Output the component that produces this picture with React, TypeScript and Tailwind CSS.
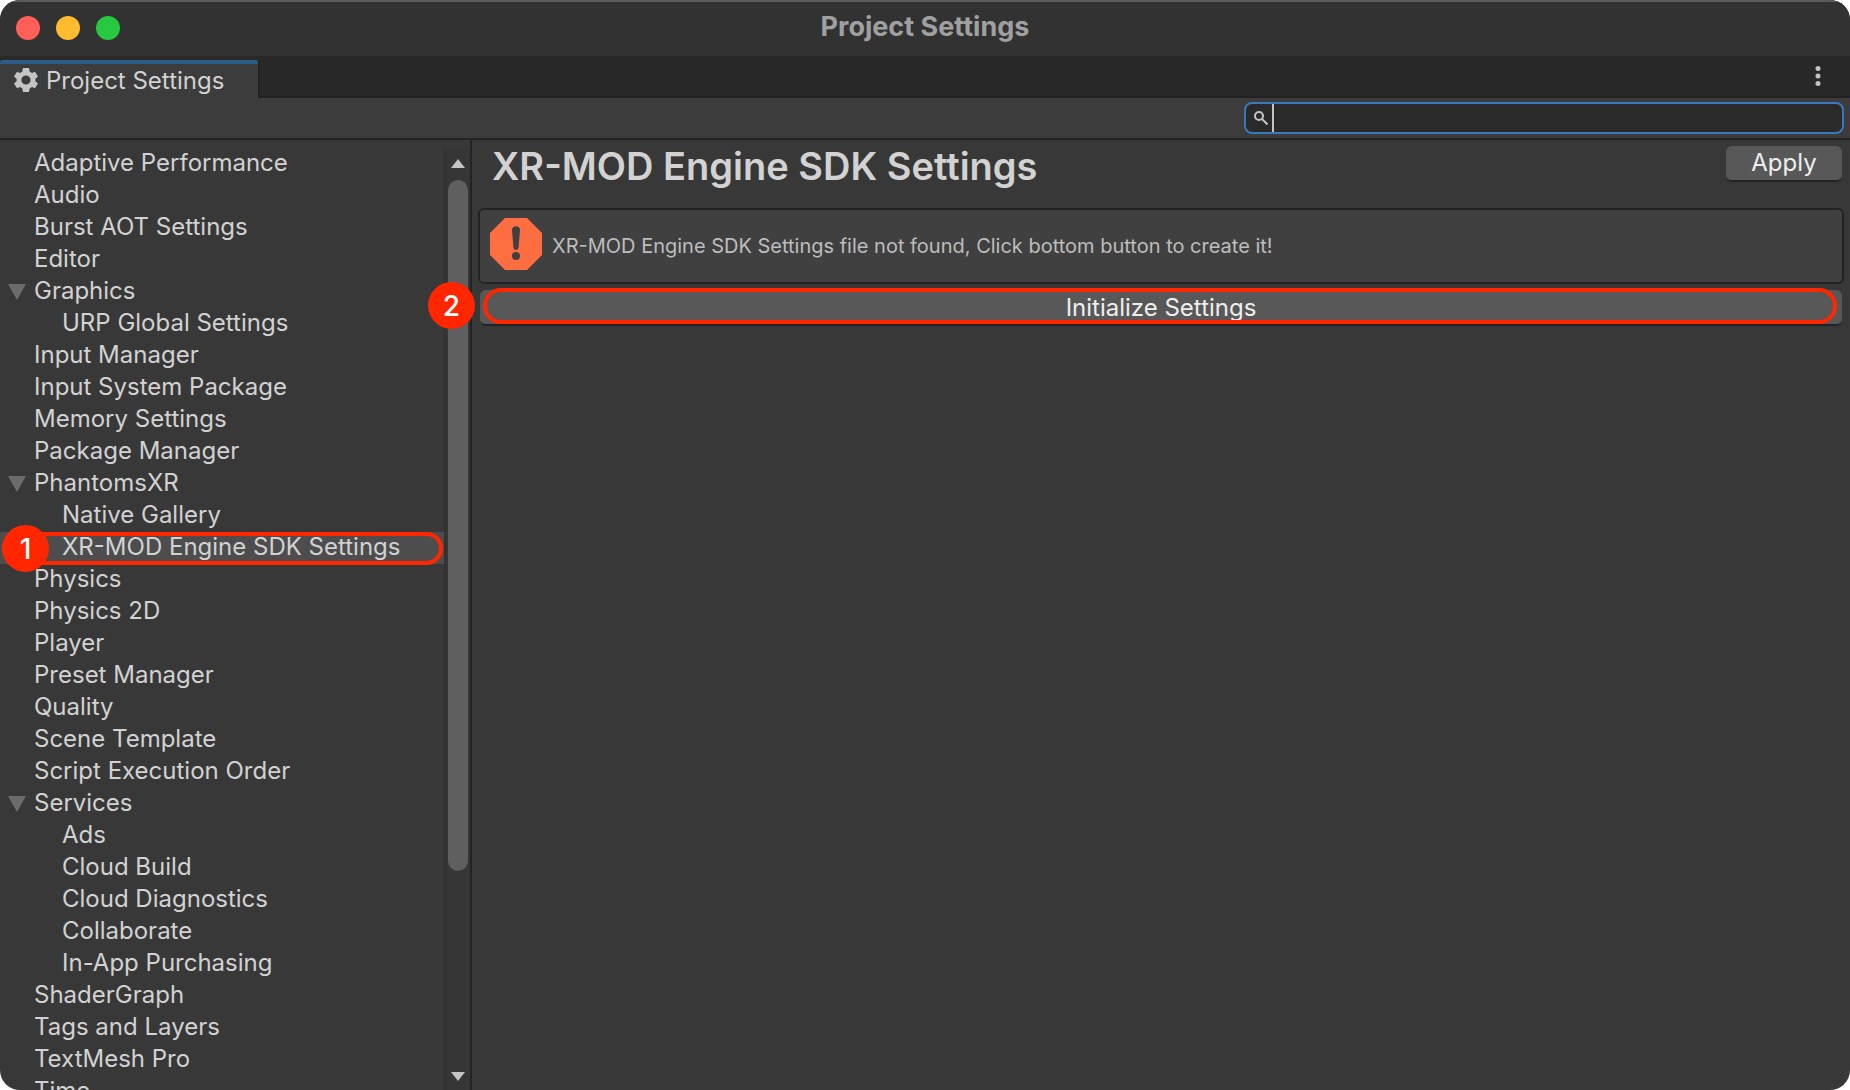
type Item = { label: string; child?: boolean; open?: boolean; selected?: boolean };

const items: Item[] = [
  { label: 'Adaptive Performance' },
  { label: 'Audio' },
  { label: 'Burst AOT Settings' },
  { label: 'Editor' },
  { label: 'Graphics', open: true },
  { label: 'URP Global Settings', child: true },
  { label: 'Input Manager' },
  { label: 'Input System Package' },
  { label: 'Memory Settings' },
  { label: 'Package Manager' },
  { label: 'PhantomsXR', open: true },
  { label: 'Native Gallery', child: true },
  { label: 'XR-MOD Engine SDK Settings', child: true, selected: true },
  { label: 'Physics' },
  { label: 'Physics 2D' },
  { label: 'Player' },
  { label: 'Preset Manager' },
  { label: 'Quality' },
  { label: 'Scene Template' },
  { label: 'Script Execution Order' },
  { label: 'Services', open: true },
  { label: 'Ads', child: true },
  { label: 'Cloud Build', child: true },
  { label: 'Cloud Diagnostics', child: true },
  { label: 'Collaborate', child: true },
  { label: 'In-App Purchasing', child: true },
  { label: 'ShaderGraph' },
  { label: 'Tags and Layers' },
  { label: 'TextMesh Pro' },
  { label: 'Time' },
];

function Gear() {
  return (
    <svg viewBox="0 0 24 24" className="size-6 shrink-0" fill="#c4c4c4" aria-hidden="true">
      <path
        fillRule="evenodd"
        d="M9 0h6l.8 3.800 2.200 1.300 3-1.300 3 4.600-2.600 2.300v2.600l2.600 2.300-3 4.600-3-1.300-2.200 1.300L15 24H9l-.8-3.800L6 18.900l-3 1.300-3-4.600 2.600-2.300v-2.600L0 8.400l3-4.600 3 1.300 2.200-1.300zM12 7.400a4.600 4.600 0 1 0 0 9.200 4.600 4.600 0 0 0 0-9.200z"
      />
    </svg>
  );
}

function ErrorIcon() {
  return (
    <svg viewBox="0 0 52 52" className="size-[52px] shrink-0" aria-hidden="true">
      <path d="M15 0h22l15 15v22L37 52H15L0 37V15z" fill="#ff6e40" />
      <path d="M22 12c0-5 8-5 8 0l-1.400 17c-.3 4-4.900 4-5.200 0z" fill="#404040" />
      <circle cx="26" cy="38" r="4" fill="#404040" />
    </svg>
  );
}

function Badge({ children, className }: { children: string; className: string }) {
  return (
    <span
      className={`absolute z-10 flex size-[47px] items-center justify-center rounded-full bg-[#ff2600] text-[28px] leading-none font-medium text-white ${className}`}
    >
      {children}
    </span>
  );
}

function TreeRow({ item }: { item: Item }) {
  return (
    <li className={`relative flex h-8 shrink-0 items-start ${item.selected ? 'bg-[#4d4d4d]' : ''}`}>
      {item.open && (
        <svg viewBox="0 0 18 16" className="absolute top-2 left-2 h-4 w-[18px]" fill="#6b6b6b" aria-hidden="true">
          <path d="M0 0h18L9 16z" />
        </svg>
      )}
      <button
        type="button"
        className={`flex-1 text-left leading-[30px] whitespace-nowrap ${item.child ? 'pl-[62px]' : 'pl-[34px]'}`}
      >
        {item.label}
      </button>
      {item.selected && (
        <>
          <span className="absolute top-0 right-px -bottom-px left-6 rounded-full border-4 border-[#ff2600]" />
          <Badge className="-top-[7px] left-0.5">1</Badge>
        </>
      )}
    </li>
  );
}

export default function App() {
  return (
    <div className="h-screen bg-white">
      <div className="flex h-full flex-col overflow-hidden rounded-[20px] bg-[#383838] font-['Inter',sans-serif] text-2xl text-[#d2d2d2]">
        <header className="relative flex h-14 shrink-0 items-center justify-center border-t-2 border-[#5c5c5c] bg-[#323232]">
          <div className="absolute top-3.5 left-4 flex gap-4">
            <button type="button" aria-label="Close" className="size-6 rounded-full bg-[#ff5f57]" />
            <button type="button" aria-label="Minimize" className="size-6 rounded-full bg-[#febc2e]" />
            <button type="button" aria-label="Zoom" className="size-6 rounded-full bg-[#28c840]" />
          </div>
          <h1 className="pb-1 text-[27px] leading-8 font-bold text-[#a0a0a0]">Project Settings</h1>
        </header>

        <div className="flex h-[42px] shrink-0 bg-[#282828] pt-1">
          <button
            type="button"
            className="flex w-[258px] items-start gap-2 rounded-t-[3px] border-t-4 border-[#2c5d87] bg-[#3c3c3c] pt-1 pl-3.5 leading-[26px] whitespace-nowrap"
          >
            <Gear />
            Project Settings
          </button>
          <div className="flex flex-1 items-start justify-end border-b-2 border-l-2 border-[#232323] pt-1.5 pr-[29px]">
            <button type="button" aria-label="More options">
              <svg viewBox="0 0 6 20" className="h-5 w-1.5" fill="#c4c4c4" aria-hidden="true">
                <circle cx="3" cy="2.500" r="2.500" />
                <circle cx="3" cy="10" r="2.500" />
                <circle cx="3" cy="17.500" r="2.500" />
              </svg>
            </button>
          </div>
        </div>

        <div className="flex h-[42px] shrink-0 items-start justify-end border-b-2 border-[#232323] bg-[#3c3c3c] pt-1 pr-1.5">
          <label className="flex h-8 w-[600px] items-center rounded-lg border-2 border-[#3a79bb] bg-[#2a2a2a] pl-2">
            <svg viewBox="0 0 14 14" className="mr-1 size-3.5" fill="none" stroke="#c4c4c4" strokeWidth="2" aria-hidden="true">
              <circle cx="5" cy="5" r="4" />
              <path d="M8 8l5.500 5.500" />
            </svg>
            <span className="h-7 w-0.5 bg-[#c4c4c4]" />
            <input type="text" aria-label="Search settings" className="min-w-0 flex-1 bg-transparent px-1 text-xl outline-none" />
          </label>
        </div>

        <div className="flex min-h-0 flex-1">
          <aside className="flex w-[472px] shrink-0 border-r-2 border-[#232323]">
            <nav aria-label="Settings" className="flex-1 pt-2">
              <ul className="flex flex-col">
                {items.map((item) => (
                  <TreeRow key={item.label} item={item} />
                ))}
              </ul>
            </nav>
            <div className="mt-2 flex w-[26px] flex-col items-center border-l-2 border-[#323232] bg-[#363636] pt-[11px] pb-[9px]">
              <svg viewBox="0 0 14 9" className="mb-3 h-[9px] w-3.5" fill="#c4c4c4" aria-hidden="true">
                <path d="M7 0l7 9H0z" />
              </svg>
              <div className="flex min-h-0 w-5 flex-1 flex-col">
                <div className="h-[78%] rounded-full bg-[#5f5f5f]" />
              </div>
              <svg viewBox="0 0 14 9" className="h-[9px] w-3.5 mt-1.5" fill="#c4c4c4" aria-hidden="true">
                <path d="M0 0h14L7 9z" />
              </svg>
            </div>
          </aside>

          <main className="min-w-0 flex-1 pt-1.5 pr-1.5 pl-1.5">
            <div className="flex items-start justify-between pl-3.5">
              <h2 className="text-[38px] leading-10 font-semibold">XR-MOD Engine SDK Settings</h2>
              <button
                type="button"
                className="mr-0.5 h-9 w-[116px] rounded-md border-b-2 border-[#232323] bg-[#585858] leading-[34px] text-[#eeeeee]"
              >
                Apply
              </button>
            </div>

            <div role="alert" className="mt-[22px] flex h-[76px] items-start gap-2.5 rounded-md border-2 border-[#232323] bg-[#404040] px-2.5 pt-2">
              <ErrorIcon />
              <p className="pt-3 text-xl leading-8 text-[#bdbdbd]">
                XR-MOD Engine SDK Settings file not found, Click bottom button to create it!
              </p>
            </div>

            <div className="relative mt-1.5 px-0.5">
              <button
                type="button"
                className="h-9 w-full rounded-md border-b-2 border-[#232323] bg-[#585858] pt-0.5 leading-8 text-[#eeeeee]"
              >
                Initialize Settings
              </button>
              <span className="absolute -top-0.5 right-[7px] left-[5px] h-9 rounded-full border-4 border-[#ff2600]" />
              <Badge className="-top-2 -left-[50px]">2</Badge>
            </div>
          </main>
        </div>
      </div>
    </div>
  );
}
